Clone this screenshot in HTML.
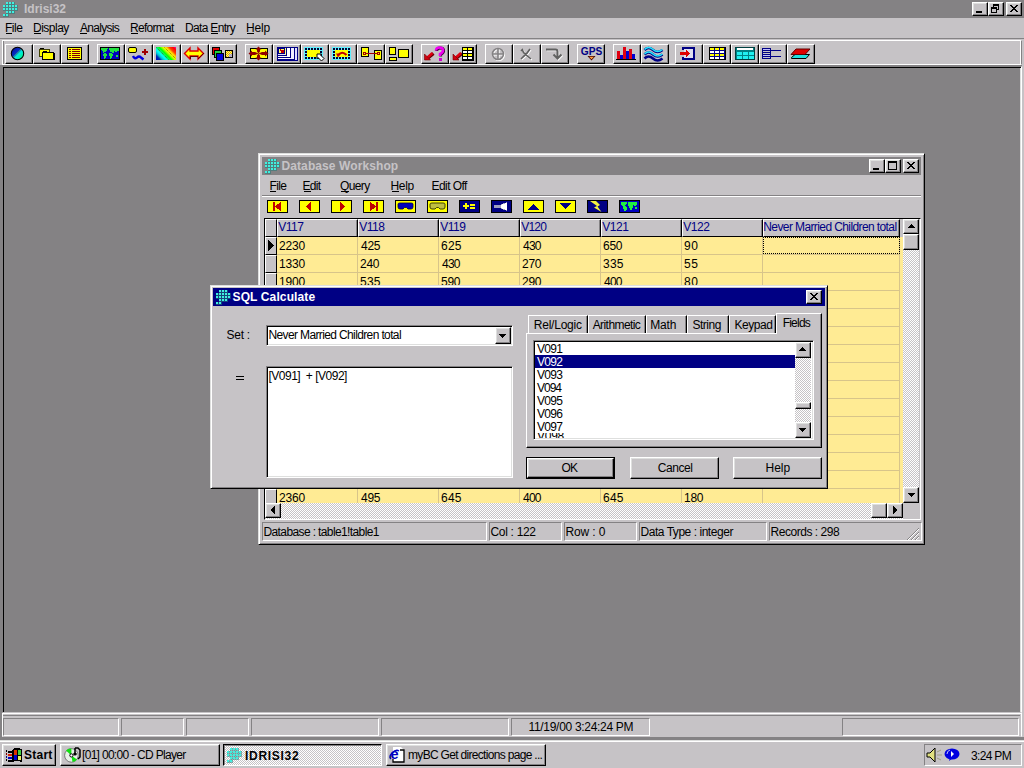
<!DOCTYPE html><html><head><meta charset="utf-8"><style>
html,body{margin:0;padding:0;width:1024px;height:768px;overflow:hidden;background:#c6c3c6;position:relative}
body div{position:absolute;box-sizing:border-box}
.t{font-family:"Liberation Sans",sans-serif;font-size:12px;line-height:12px;white-space:pre;letter-spacing:-0.25px;color:#000}
.tb{font-family:"Liberation Sans",sans-serif;font-size:12px;line-height:12px;white-space:pre;font-weight:bold;color:#000}
svg{position:absolute;overflow:visible}
</style></head><body>

<div style="left:0px;top:0px;width:1024px;height:18px;background:#848284"></div>
<svg style="left:3px;top:2px" width="15" height="15" viewBox="0 0 15 15" shape-rendering="crispEdges"><rect x="2.5" y="-0.5" width="3" height="3" fill="#2a7a78" opacity=".55"/><rect x="5.5" y="-0.5" width="3" height="3" fill="#2a7a78" opacity=".55"/><rect x="8.5" y="-0.5" width="3" height="3" fill="#2a7a78" opacity=".55"/><rect x="-0.5" y="2.5" width="3" height="3" fill="#2a7a78" opacity=".55"/><rect x="2.5" y="2.5" width="3" height="3" fill="#2a7a78" opacity=".55"/><rect x="5.5" y="2.5" width="3" height="3" fill="#2a7a78" opacity=".55"/><rect x="8.5" y="2.5" width="3" height="3" fill="#2a7a78" opacity=".55"/><rect x="11.5" y="2.5" width="3" height="3" fill="#2a7a78" opacity=".55"/><rect x="-0.5" y="5.5" width="3" height="3" fill="#2a7a78" opacity=".55"/><rect x="2.5" y="5.5" width="3" height="3" fill="#2a7a78" opacity=".55"/><rect x="5.5" y="5.5" width="3" height="3" fill="#2a7a78" opacity=".55"/><rect x="8.5" y="5.5" width="3" height="3" fill="#2a7a78" opacity=".55"/><rect x="11.5" y="5.5" width="3" height="3" fill="#2a7a78" opacity=".55"/><rect x="2.5" y="8.5" width="3" height="3" fill="#2a7a78" opacity=".55"/><rect x="5.5" y="8.5" width="3" height="3" fill="#2a7a78" opacity=".55"/><rect x="8.5" y="8.5" width="3" height="3" fill="#2a7a78" opacity=".55"/><rect x="-0.5" y="11.5" width="3" height="3" fill="#2a7a78" opacity=".55"/><rect x="2.5" y="11.5" width="3" height="3" fill="#2a7a78" opacity=".55"/><rect x="3" y="0" width="2" height="2" fill="#40f0e0"/><rect x="6" y="0" width="2" height="2" fill="#40f0e0"/><rect x="9" y="0" width="2" height="2" fill="#40f0e0"/><rect x="0" y="3" width="2" height="2" fill="#40f0e0"/><rect x="3" y="3" width="2" height="2" fill="#40f0e0"/><rect x="6" y="3" width="2" height="2" fill="#40f0e0"/><rect x="9" y="3" width="2" height="2" fill="#40f0e0"/><rect x="12" y="3" width="2" height="2" fill="#40f0e0"/><rect x="0" y="6" width="2" height="2" fill="#40f0e0"/><rect x="3" y="6" width="2" height="2" fill="#40f0e0"/><rect x="6" y="6" width="2" height="2" fill="#40f0e0"/><rect x="9" y="6" width="2" height="2" fill="#40f0e0"/><rect x="12" y="6" width="2" height="2" fill="#40f0e0"/><rect x="3" y="9" width="2" height="2" fill="#40f0e0"/><rect x="6" y="9" width="2" height="2" fill="#40f0e0"/><rect x="9" y="9" width="2" height="2" fill="#40f0e0"/><rect x="0" y="12" width="2" height="2" fill="#40f0e0"/><rect x="3" y="12" width="2" height="2" fill="#40f0e0"/></svg>
<div class="tb" style="left:24px;top:3px;letter-spacing:0.000px;color:#c6c3c6">Idrisi32</div>
<div style="left:972px;top:2px;width:16px;height:14px;background:#c6c3c6;border-style:solid;border-width:1px;border-color:#fff #000 #000 #fff;box-shadow:inset -1px -1px #848284, inset 1px 1px #dedfde;"></div>
<svg style="left:972px;top:2px" width="16" height="14" viewBox="0 0 16 14" shape-rendering="crispEdges"><rect x="4" y="9" width="6" height="2" fill="#000"/></svg>
<div style="left:988px;top:2px;width:16px;height:14px;background:#c6c3c6;border-style:solid;border-width:1px;border-color:#fff #000 #000 #fff;box-shadow:inset -1px -1px #848284, inset 1px 1px #dedfde;"></div>
<svg style="left:988px;top:2px" width="16" height="14" viewBox="0 0 16 14" shape-rendering="crispEdges"><rect x="5" y="2" width="6" height="6" fill="#000"/><rect x="6" y="4" width="4" height="3" fill="#c6c3c6"/><rect x="3" y="5" width="6" height="6" fill="#000"/><rect x="4" y="7" width="4" height="3" fill="#c6c3c6"/></svg>
<div style="left:1006px;top:2px;width:16px;height:14px;background:#c6c3c6;border-style:solid;border-width:1px;border-color:#fff #000 #000 #fff;box-shadow:inset -1px -1px #848284, inset 1px 1px #dedfde;"></div>
<svg style="left:1006px;top:2px" width="16" height="14" viewBox="0 0 16 14" shape-rendering="crispEdges"><path d="M4 3h2v1h-2zM10 3h2v1h-2zM5 4h2v1h-2zM9 4h2v1h-2zM6 5h4v1h-4zM7 6h2v1h-2zM6 7h4v1h-4zM5 8h2v1h-2zM9 8h2v1h-2zM4 9h2v1h-2zM10 9h2v1h-2z" fill="#000"/></svg>
<div class="t" style="left:5px;top:22px;letter-spacing:-0.500px;">File</div>
<div style="left:6px;top:33px;width:6px;height:1px;background:#000"></div>
<div class="t" style="left:33px;top:22px;letter-spacing:-0.500px;">Display</div>
<div style="left:34px;top:33px;width:7px;height:1px;background:#000"></div>
<div class="t" style="left:80px;top:22px;letter-spacing:-0.714px;">Analysis</div>
<div style="left:80px;top:33px;width:7px;height:1px;background:#000"></div>
<div class="t" style="left:130px;top:22px;letter-spacing:-0.714px;">Reformat</div>
<div style="left:131px;top:33px;width:7px;height:1px;background:#000"></div>
<div class="t" style="left:246px;top:22px;letter-spacing:-0.167px;">Help</div>
<div style="left:247px;top:33px;width:7px;height:1px;background:#000"></div>
<div class="t" style="left:185px;top:22px;letter-spacing:-0.667px;">Data Entry</div>
<div style="left:211px;top:33px;width:7px;height:1px;background:#000"></div>
<div style="left:0px;top:38px;width:1024px;height:1px;background:#848284"></div>
<div style="left:2px;top:40px;width:1020px;height:25px;border:1px solid;border-color:#fff #848284 #fff #fff;box-shadow:inset 1px 0 #848284, inset -1px 0 #fff"></div>
<div style="left:5px;top:44px;width:28px;height:20px;background:#c6c3c6;border-style:solid;border-width:1px;border-color:#fff #000 #000 #fff;box-shadow:inset -1px -1px #848284"></div>
<svg style="left:6px;top:45px" width="26" height="18" viewBox="0 0 26 18" shape-rendering="crispEdges"><defs><linearGradient id="g1" x1="0" y1="0" x2="1" y2="1">
<stop offset="0" stop-color="#0000a0"/><stop offset=".42" stop-color="#0830c0"/><stop offset=".45" stop-color="#2080a0"/><stop offset=".52" stop-color="#10a0b0"/><stop offset=".55" stop-color="#00e8e8"/><stop offset="1" stop-color="#00ff60"/></linearGradient></defs>
<circle cx="11.5" cy="8.5" r="6.2" fill="url(#g1)" stroke="#000" stroke-width="1.1" shape-rendering="geometricPrecision"/></svg>
<div style="left:33px;top:44px;width:28px;height:20px;background:#c6c3c6;border-style:solid;border-width:1px;border-color:#fff #000 #000 #fff;box-shadow:inset -1px -1px #848284"></div>
<svg style="left:34px;top:45px" width="26" height="18" viewBox="0 0 26 18" shape-rendering="crispEdges"><rect x="6" y="3" width="4" height="2" fill="#000"/><rect x="5" y="4" width="11" height="8" fill="#404000"/><rect x="6" y="5" width="9" height="6" fill="#ffff00"/><rect x="9" y="6" width="4" height="2" fill="#000"/><rect x="8" y="7" width="12" height="8" fill="#000"/><rect x="9" y="8" width="10" height="6" fill="#ffff00"/><rect x="9" y="8" width="10" height="6" fill="#ffff00"/><rect x="8" y="14" width="13" height="1" fill="#000"/><rect x="20" y="8" width="1" height="7" fill="#000"/></svg>
<div style="left:61px;top:44px;width:28px;height:20px;background:#c6c3c6;border-style:solid;border-width:1px;border-color:#fff #000 #000 #fff;box-shadow:inset -1px -1px #848284"></div>
<svg style="left:62px;top:45px" width="26" height="18" viewBox="0 0 26 18" shape-rendering="crispEdges"><rect x="5" y="2" width="15" height="13" fill="#000"/><rect x="6" y="3" width="13" height="11" fill="#ffff00"/><rect x="7" y="4" width="2" height="1" fill="#800000"/><rect x="10" y="4" width="8" height="1" fill="#800000"/><rect x="7" y="6" width="2" height="1" fill="#800000"/><rect x="10" y="6" width="8" height="1" fill="#800000"/><rect x="7" y="8" width="2" height="1" fill="#800000"/><rect x="10" y="8" width="8" height="1" fill="#800000"/><rect x="7" y="10" width="2" height="1" fill="#800000"/><rect x="10" y="10" width="8" height="1" fill="#800000"/><rect x="7" y="12" width="2" height="1" fill="#800000"/><rect x="10" y="12" width="8" height="1" fill="#800000"/></svg>
<div style="left:97px;top:44px;width:28px;height:20px;background:#c6c3c6;border-style:solid;border-width:1px;border-color:#fff #000 #000 #fff;box-shadow:inset -1px -1px #848284"></div>
<svg style="left:98px;top:45px" width="26" height="18" viewBox="0 0 26 18" shape-rendering="crispEdges"><rect x="2" y="2" width="20" height="13" fill="#000"/><rect x="3" y="3" width="18" height="11" fill="#0000c0"/><path d="M3 3h7v1h-1v2h-1v1h-2v1h-1v-2h-1v-1h-1z M6 8h2v1h1v2h-1v2h-1v1h-1v-3h-1v-2h1z M11 3h10v3h-2v1h-2v-1h-1v2h-2v-1h-2v-2h-1z M11 8h3v1h1v2h-1v2h-1v1h-1v-3h-1z M18 10h2v2h-2z" fill="#20e040"/></svg>
<div style="left:125px;top:44px;width:28px;height:20px;background:#c6c3c6;border-style:solid;border-width:1px;border-color:#fff #000 #000 #fff;box-shadow:inset -1px -1px #848284"></div>
<svg style="left:126px;top:45px" width="26" height="18" viewBox="0 0 26 18" shape-rendering="crispEdges"><rect x="2.5" y="2.5" width="8" height="5" rx="1.5" fill="#ffff00" stroke="#000" shape-rendering="geometricPrecision"/><rect x="18" y="4" width="2" height="6" fill="#a00000"/><rect x="16" y="6" width="6" height="2" fill="#a00000"/><path d="M7 11 Q8.5 14.5 11 12.5 Q13 10.5 15 12.5 L17.5 14.5" fill="none" stroke="#0000e0" stroke-width="2.4" shape-rendering="geometricPrecision"/></svg>
<div style="left:153px;top:44px;width:28px;height:20px;background:#c6c3c6;border-style:solid;border-width:1px;border-color:#fff #000 #000 #fff;box-shadow:inset -1px -1px #848284"></div>
<svg style="left:154px;top:45px" width="26" height="18" viewBox="0 0 26 18" shape-rendering="crispEdges"><defs><linearGradient id="g6" gradientUnits="userSpaceOnUse" x1="2" y1="15" x2="18.5" y2="-1.5">
<stop offset="0" stop-color="#0000c0"/><stop offset=".14" stop-color="#0030b0"/><stop offset=".22" stop-color="#00c0d0"/><stop offset=".32" stop-color="#00ffff"/><stop offset=".4" stop-color="#00ff80"/><stop offset=".48" stop-color="#00ff00"/><stop offset=".58" stop-color="#c0ff00"/><stop offset=".63" stop-color="#ffff00"/><stop offset=".7" stop-color="#ffd000"/><stop offset=".78" stop-color="#ff4000"/><stop offset=".9" stop-color="#ff0000"/><stop offset="1" stop-color="#ff00c0"/></linearGradient></defs>
<rect x="2" y="2" width="20" height="13" fill="url(#g6)"/>
<path d="M2.5 2.5 L15 15 M10.5 2.5 L22 14" stroke="#604000" stroke-width="1" stroke-dasharray="1 1" shape-rendering="geometricPrecision" opacity=".8"/></svg>
<div style="left:181px;top:44px;width:28px;height:20px;background:#c6c3c6;border-style:solid;border-width:1px;border-color:#fff #000 #000 #fff;box-shadow:inset -1px -1px #848284"></div>
<svg style="left:182px;top:45px" width="26" height="18" viewBox="0 0 26 18" shape-rendering="crispEdges"><path d="M2.5 8.5 L8 3 L8 6 L16 6 L16 3 L21.5 8.5 L16 14 L16 11 L8 11 L8 14 Z" fill="#ffff00" stroke="#e00000" stroke-width="1.4" shape-rendering="geometricPrecision"/><path d="M8 14 L8 11 L16 11 M16 14 L21.5 8.5" stroke="#600000" stroke-width="1" fill="none"/></svg>
<div style="left:209px;top:44px;width:28px;height:20px;background:#c6c3c6;border-style:solid;border-width:1px;border-color:#fff #000 #000 #fff;box-shadow:inset -1px -1px #848284"></div>
<svg style="left:210px;top:45px" width="26" height="18" viewBox="0 0 26 18" shape-rendering="crispEdges"><rect x="2" y="2" width="8" height="8" fill="#000"/><rect x="3" y="3" width="6" height="6" fill="#e00000"/><rect x="4" y="5" width="8" height="8" fill="#000"/><rect x="5" y="6" width="6" height="6" fill="#20d040"/><rect x="6" y="8" width="8" height="8" fill="#000"/><rect x="7" y="9" width="6" height="6" fill="#0000e0"/><rect x="15" y="5" width="8" height="8" fill="#000"/><rect x="16" y="6" width="6" height="6" fill="#000"/><rect x="16" y="6" width="6" height="6" fill="#e0a000"/><path d="M16 6h1v1h-1zM18 6h1v1h-1zM20 6h1v1h-1zM17 7h1v1h-1zM19 7h1v1h-1zM21 7h1v1h-1zM16 8h1v1h-1zM18 8h1v1h-1zM20 8h1v1h-1zM17 9h1v1h-1zM19 9h1v1h-1zM21 9h1v1h-1zM16 10h1v1h-1zM18 10h1v1h-1zM20 10h1v1h-1zM17 11h1v1h-1zM19 11h1v1h-1zM21 11h1v1h-1z" fill="#ffff60"/><rect x="19" y="9" width="3" height="3" fill="#a0a0ff" opacity=".7"/></svg>
<div style="left:245px;top:44px;width:28px;height:20px;background:#c6c3c6;border-style:solid;border-width:1px;border-color:#fff #000 #000 #fff;box-shadow:inset -1px -1px #848284"></div>
<svg style="left:246px;top:45px" width="26" height="18" viewBox="0 0 26 18" shape-rendering="crispEdges"><rect x="4" y="3" width="18" height="11" fill="#000"/><rect x="5" y="4" width="16" height="9" fill="#ffff00"/><path d="M12.5 1.5 L15.5 4.5 L14 4.5 L14 6.5 L12.5 8.5 L11 6.5 L11 4.5 L9.5 4.5 Z M12.5 15.5 L15.5 12.5 L14 12.5 L14 10.5 L12.5 8.5 L11 10.5 L11 12.5 L9.5 12.5 Z M2.5 8.5 L6 5.5 L6 7 L9 7 L12.5 8.5 L9 10 L6 10 L6 11.5 Z M22.5 8.5 L19 5.5 L19 7 L16 7 L12.5 8.5 L16 10 L19 10 L19 11.5 Z" fill="#900000" shape-rendering="geometricPrecision"/></svg>
<div style="left:273px;top:44px;width:28px;height:20px;background:#c6c3c6;border-style:solid;border-width:1px;border-color:#fff #000 #000 #fff;box-shadow:inset -1px -1px #848284"></div>
<svg style="left:274px;top:45px" width="26" height="18" viewBox="0 0 26 18" shape-rendering="crispEdges"><rect x="3" y="2" width="21" height="14" fill="#000084"/><rect x="4" y="3" width="19" height="12" fill="#fff"/><rect x="4" y="3" width="19" height="12" fill="#e0e0ff"/><rect x="4" y="10" width="9" height="1" fill="#000084"/><rect x="12" y="3" width="1" height="8" fill="#000084"/><rect x="4" y="12" width="13" height="1" fill="#000084"/><rect x="16" y="3" width="1" height="10" fill="#000084"/><rect x="4" y="14" width="17" height="1" fill="#000084"/><rect x="20" y="3" width="1" height="12" fill="#000084"/><rect x="13" y="3" width="3" height="9" fill="#fff"/><rect x="4" y="11" width="8" height="1" fill="#fff"/><rect x="17" y="3" width="3" height="11" fill="#f0f0ff"/><rect x="4" y="13" width="12" height="1" fill="#fff"/><rect x="4" y="3" width="7" height="6" fill="#000084"/><rect x="5" y="4" width="5" height="4" fill="#ffff60"/><path d="M6 4.5 L9 7.5 M9 5 V7.5 H6.5" stroke="#c00000" stroke-width="1.2" fill="none"/><rect x="11" y="3" width="1" height="7" fill="#ffff80"/></svg>
<div style="left:301px;top:44px;width:28px;height:20px;background:#c6c3c6;border-style:solid;border-width:1px;border-color:#fff #000 #000 #fff;box-shadow:inset -1px -1px #848284"></div>
<svg style="left:302px;top:45px" width="26" height="18" viewBox="0 0 26 18" shape-rendering="crispEdges"><rect x="2" y="2" width="19" height="13" fill="#60f0ff"/><rect x="5" y="5" width="13" height="7" fill="#ffff00"/><rect x="3" y="3" width="2" height="2" fill="#000030"/><rect x="3" y="6" width="2" height="2" fill="#000030"/><rect x="3" y="9" width="2" height="2" fill="#000030"/><rect x="3" y="12" width="2" height="2" fill="#000030"/><rect x="6" y="3" width="2" height="2" fill="#000030"/><rect x="6" y="12" width="2" height="2" fill="#000030"/><rect x="9" y="3" width="2" height="2" fill="#000030"/><rect x="9" y="12" width="2" height="2" fill="#000030"/><rect x="12" y="3" width="2" height="2" fill="#000030"/><rect x="12" y="12" width="2" height="2" fill="#000030"/><rect x="15" y="3" width="2" height="2" fill="#000030"/><rect x="15" y="12" width="2" height="2" fill="#000030"/><rect x="18" y="3" width="2" height="2" fill="#000030"/><rect x="18" y="6" width="2" height="2" fill="#000030"/><rect x="18" y="9" width="2" height="2" fill="#000030"/><rect x="18" y="12" width="2" height="2" fill="#000030"/><path d="M15 9 H19.5 L18.5 10 L22 13.5 L19.5 16 L16 12.5 L15 13.5 Z" fill="#fff" stroke="#000" stroke-width="1" shape-rendering="geometricPrecision"/></svg>
<div style="left:329px;top:44px;width:28px;height:20px;background:#c6c3c6;border-style:solid;border-width:1px;border-color:#fff #000 #000 #fff;box-shadow:inset -1px -1px #848284"></div>
<svg style="left:330px;top:45px" width="26" height="18" viewBox="0 0 26 18" shape-rendering="crispEdges"><rect x="2" y="2" width="19" height="13" fill="#60f0ff"/><rect x="5" y="5" width="13" height="7" fill="#ffff00"/><rect x="3" y="3" width="2" height="2" fill="#000030"/><rect x="3" y="6" width="2" height="2" fill="#000030"/><rect x="3" y="9" width="2" height="2" fill="#000030"/><rect x="3" y="12" width="2" height="2" fill="#000030"/><rect x="6" y="3" width="2" height="2" fill="#000030"/><rect x="6" y="12" width="2" height="2" fill="#000030"/><rect x="9" y="3" width="2" height="2" fill="#000030"/><rect x="9" y="12" width="2" height="2" fill="#000030"/><rect x="12" y="3" width="2" height="2" fill="#000030"/><rect x="12" y="12" width="2" height="2" fill="#000030"/><rect x="15" y="3" width="2" height="2" fill="#000030"/><rect x="15" y="12" width="2" height="2" fill="#000030"/><rect x="18" y="3" width="2" height="2" fill="#000030"/><rect x="18" y="6" width="2" height="2" fill="#000030"/><rect x="18" y="9" width="2" height="2" fill="#000030"/><rect x="18" y="12" width="2" height="2" fill="#000030"/><path d="M8.5 10 Q12 5.5 16.5 10" fill="none" stroke="#c00000" stroke-width="2.2" shape-rendering="geometricPrecision"/><path d="M6 8.5 L10.5 8.5 L8 12.5 Z" fill="#c00000" shape-rendering="geometricPrecision"/></svg>
<div style="left:357px;top:44px;width:28px;height:20px;background:#c6c3c6;border-style:solid;border-width:1px;border-color:#fff #000 #000 #fff;box-shadow:inset -1px -1px #848284"></div>
<svg style="left:358px;top:45px" width="26" height="18" viewBox="0 0 26 18" shape-rendering="crispEdges"><rect x="3" y="2" width="8" height="10" fill="#000"/><rect x="4" y="3" width="6" height="8" fill="#ffff00"/><rect x="16" y="5" width="8" height="10" fill="#000"/><rect x="17" y="6" width="6" height="8" fill="#ffff00"/><rect x="8" y="8" width="11" height="1" fill="#a00000"/><rect x="5" y="7" width="3" height="3" fill="#a00000"/><rect x="6" y="8" width="1" height="1" fill="#ffff00"/><rect x="19" y="7" width="3" height="3" fill="#a00000"/><rect x="20" y="8" width="1" height="1" fill="#ffff00"/></svg>
<div style="left:385px;top:44px;width:28px;height:20px;background:#c6c3c6;border-style:solid;border-width:1px;border-color:#fff #000 #000 #fff;box-shadow:inset -1px -1px #848284"></div>
<svg style="left:386px;top:45px" width="26" height="18" viewBox="0 0 26 18" shape-rendering="crispEdges"><rect x="3" y="2" width="7" height="8" fill="#000"/><rect x="4" y="3" width="5" height="6" fill="#ffff00"/><rect x="3" y="12" width="8" height="4" fill="#000"/><rect x="4" y="13" width="6" height="2" fill="#ffff00"/><rect x="12" y="4" width="11" height="9" fill="#000"/><rect x="13" y="5" width="9" height="7" fill="#ffff00"/></svg>
<div style="left:421px;top:44px;width:28px;height:20px;background:#c6c3c6;border-style:solid;border-width:1px;border-color:#fff #000 #000 #fff;box-shadow:inset -1px -1px #848284"></div>
<svg style="left:422px;top:45px" width="26" height="18" viewBox="0 0 26 18" shape-rendering="crispEdges"><g transform="translate(0 0)" shape-rendering="geometricPrecision"><path d="M11.5 8.5 L6 13" stroke="#600000" stroke-width="3.2"/><path d="M10.5 8 L5.5 12.5" stroke="#e00010" stroke-width="2.6"/><path d="M2.5 9 L2.5 15 L8.5 15 Z" fill="#d00010" stroke="#700000" stroke-width=".6"/></g><path d="M14 5.5 Q14 2.5 17.5 2.5 Q21 2.5 21 5.5 Q21 7.5 18 9 L18 11" stroke="#400040" stroke-width="2.8" fill="none" transform="translate(.7 .5)" shape-rendering="geometricPrecision"/><path d="M14 5.5 Q14 2.5 17.5 2.5 Q21 2.5 21 5.5 Q21 7.5 18 9 L18 11" stroke="#f000f0" stroke-width="2.6" fill="none" shape-rendering="geometricPrecision"/><rect x="17" y="13" width="3" height="3" fill="#d000d0"/></svg>
<div style="left:449px;top:44px;width:28px;height:20px;background:#c6c3c6;border-style:solid;border-width:1px;border-color:#fff #000 #000 #fff;box-shadow:inset -1px -1px #848284"></div>
<svg style="left:450px;top:45px" width="26" height="18" viewBox="0 0 26 18" shape-rendering="crispEdges"><g transform="translate(0.5 0)" shape-rendering="geometricPrecision"><path d="M11.5 8.5 L6 13" stroke="#600000" stroke-width="3.2"/><path d="M10.5 8 L5.5 12.5" stroke="#e00010" stroke-width="2.6"/><path d="M2.5 9 L2.5 15 L8.5 15 Z" fill="#d00010" stroke="#700000" stroke-width=".6"/></g><rect x="12" y="2" width="12" height="14" fill="#000"/><rect x="13" y="2" width="1" height="1" fill="#000"/><rect x="13" y="3" width="4" height="2" fill="#ffff00"/><rect x="18" y="3" width="4" height="2" fill="#ffff00"/><rect x="13" y="6" width="4" height="2" fill="#fff"/><rect x="18" y="6" width="4" height="2" fill="#fff"/><rect x="13" y="9" width="4" height="2" fill="#ffff00"/><rect x="18" y="9" width="4" height="2" fill="#ffff00"/><rect x="13" y="12" width="4" height="2" fill="#fff"/><rect x="18" y="12" width="4" height="2" fill="#fff"/></svg>
<div style="left:485px;top:44px;width:28px;height:20px;background:#c6c3c6;border-style:solid;border-width:1px;border-color:#fff #000 #000 #fff;box-shadow:inset -1px -1px #848284"></div>
<svg style="left:486px;top:45px" width="26" height="18" viewBox="0 0 26 18" shape-rendering="crispEdges"><g shape-rendering="geometricPrecision"><circle cx="12" cy="9" r="5.5" fill="none" stroke="#fff" stroke-width="1.6" transform="translate(.8 .8)"/><path d="M12 3.5 V14.5 M6.5 9 H17.5" stroke="#fff" stroke-width="1.6" transform="translate(.8 .8)"/><circle cx="12" cy="9" r="5.5" fill="none" stroke="#848284" stroke-width="1.6"/><path d="M12 3.5 V14.5 M6.5 9 H17.5" stroke="#848284" stroke-width="1.6"/></g></svg>
<div style="left:513px;top:44px;width:28px;height:20px;background:#c6c3c6;border-style:solid;border-width:1px;border-color:#fff #000 #000 #fff;box-shadow:inset -1px -1px #848284"></div>
<svg style="left:514px;top:45px" width="26" height="18" viewBox="0 0 26 18" shape-rendering="crispEdges"><g shape-rendering="geometricPrecision" fill="none" stroke-width="1.6"><path d="M8 4 Q9 8 12 10 L17 14 M16 4 Q13 9 9 12 L7 14 M7 6 l2 -2" stroke="#fff" transform="translate(.8 .8)"/><path d="M8 4 Q9 8 12 10 L17 14 M16 4 Q13 9 9 12 L7 14 M7 6 l2 -2" stroke="#606060"/></g></svg>
<div style="left:541px;top:44px;width:28px;height:20px;background:#c6c3c6;border-style:solid;border-width:1px;border-color:#fff #000 #000 #fff;box-shadow:inset -1px -1px #848284"></div>
<svg style="left:542px;top:45px" width="26" height="18" viewBox="0 0 26 18" shape-rendering="crispEdges"><g shape-rendering="geometricPrecision" fill="none" stroke-width="2"><path d="M4 4.5 H13.5 Q15.5 4.5 15.5 6.5 V12.5 M11.5 9.5 L15.5 13.5 L19.5 9.5" stroke="#fff" transform="translate(.8 .8)"/><path d="M4 4.5 H13.5 Q15.5 4.5 15.5 6.5 V12.5 M11.5 9.5 L15.5 13.5 L19.5 9.5" stroke="#606060"/></g></svg>
<div style="left:577px;top:44px;width:28px;height:20px;background:#c6c3c6;border-style:solid;border-width:1px;border-color:#fff #000 #000 #fff;box-shadow:inset -1px -1px #848284"></div>
<svg style="left:578px;top:45px" width="26" height="18" viewBox="0 0 26 18" shape-rendering="crispEdges"><text x="13.6" y="9.8" text-anchor="middle" font-family="Liberation Sans" font-weight="bold" font-size="10" fill="#000084" textLength="21.5" lengthAdjust="spacingAndGlyphs" shape-rendering="geometricPrecision">GPS</text><path d="M9.5 11 L17.5 11 L13.5 15.5 Z" fill="#400000" shape-rendering="geometricPrecision"/><path d="M11 11.8 L16 11.8 L13.5 14.3 Z" fill="#ffa040" shape-rendering="geometricPrecision"/></svg>
<div style="left:613px;top:44px;width:28px;height:20px;background:#c6c3c6;border-style:solid;border-width:1px;border-color:#fff #000 #000 #fff;box-shadow:inset -1px -1px #848284"></div>
<svg style="left:614px;top:45px" width="26" height="18" viewBox="0 0 26 18" shape-rendering="crispEdges"><rect x="2" y="14" width="20" height="1" fill="#000"/><rect x="3" y="6" width="3" height="8" fill="#e00010"/><rect x="6" y="10" width="3" height="4" fill="#0000d0"/><rect x="9" y="2" width="3" height="12" fill="#e00010"/><rect x="12" y="6" width="3" height="8" fill="#0000d0"/><rect x="15" y="4" width="3" height="10" fill="#e00010"/><rect x="18" y="9" width="3" height="5" fill="#0000d0"/></svg>
<div style="left:641px;top:44px;width:28px;height:20px;background:#c6c3c6;border-style:solid;border-width:1px;border-color:#fff #000 #000 #fff;box-shadow:inset -1px -1px #848284"></div>
<svg style="left:642px;top:45px" width="26" height="18" viewBox="0 0 26 18" shape-rendering="crispEdges"><g shape-rendering="geometricPrecision" fill="none"><path d="M2.5 5 Q6.5 1 11 5 T20.5 5 M2.5 9.5 Q6.5 5.5 11 9.5 T20.5 9.5 M2.5 13.5 Q6.5 9.5 11 13.5 T20.5 13.5" stroke="#000084" stroke-width="2.6"/><path d="M2.5 4.5 Q6.5 0.5 11 4.5 T20.5 4.5 M2.5 9 Q6.5 5 11 9 T20.5 9" stroke="#20e8ff" stroke-width="1.6"/></g></svg>
<div style="left:675px;top:44px;width:28px;height:20px;background:#c6c3c6;border-style:solid;border-width:1px;border-color:#fff #000 #000 #fff;box-shadow:inset -1px -1px #848284"></div>
<svg style="left:676px;top:45px" width="26" height="18" viewBox="0 0 26 18" shape-rendering="crispEdges"><rect x="6" y="2" width="13" height="13" fill="#000084"/><rect x="8" y="4" width="9" height="9" fill="#e0e0f0"/><rect x="6" y="5" width="2" height="7" fill="#c6c3c6"/><path d="M4 7 H10 V5 L14 8.5 L10 12 V10 H4 Z" fill="#e00000"/></svg>
<div style="left:703px;top:44px;width:28px;height:20px;background:#c6c3c6;border-style:solid;border-width:1px;border-color:#fff #000 #000 #fff;box-shadow:inset -1px -1px #848284"></div>
<svg style="left:704px;top:45px" width="26" height="18" viewBox="0 0 26 18" shape-rendering="crispEdges"><rect x="5" y="2" width="17" height="13" fill="#000"/><rect x="6" y="3" width="15" height="11" fill="#000084"/><rect x="6" y="3" width="1" height="1" fill="#c0c0ff"/><rect x="6" y="3" width="4" height="2" fill="#ffff00"/><rect x="11" y="3" width="4" height="2" fill="#ffff00"/><rect x="16" y="3" width="4" height="2" fill="#ffff00"/><rect x="6" y="6" width="4" height="2" fill="#fff"/><rect x="11" y="6" width="4" height="2" fill="#fff"/><rect x="16" y="6" width="4" height="2" fill="#fff"/><rect x="6" y="9" width="4" height="2" fill="#ffff00"/><rect x="11" y="9" width="4" height="2" fill="#ffff00"/><rect x="16" y="9" width="4" height="2" fill="#ffff00"/><rect x="6" y="12" width="4" height="2" fill="#fff"/><rect x="11" y="12" width="4" height="2" fill="#fff"/><rect x="16" y="12" width="4" height="2" fill="#fff"/></svg>
<div style="left:731px;top:44px;width:28px;height:20px;background:#c6c3c6;border-style:solid;border-width:1px;border-color:#fff #000 #000 #fff;box-shadow:inset -1px -1px #848284"></div>
<svg style="left:732px;top:45px" width="26" height="18" viewBox="0 0 26 18" shape-rendering="crispEdges"><rect x="3" y="2" width="20" height="13" fill="#004040"/><rect x="4" y="3" width="18" height="11" fill="#008284"/><rect x="5" y="3" width="16" height="2" fill="#fff"/><rect x="5" y="7" width="5" height="3" fill="#20f0f0"/><rect x="11" y="7" width="5" height="3" fill="#20f0f0"/><rect x="17" y="7" width="5" height="3" fill="#20f0f0"/><rect x="5" y="11" width="5" height="3" fill="#20f0f0"/><rect x="11" y="11" width="5" height="3" fill="#20f0f0"/><rect x="17" y="11" width="5" height="3" fill="#20f0f0"/></svg>
<div style="left:759px;top:44px;width:28px;height:20px;background:#c6c3c6;border-style:solid;border-width:1px;border-color:#fff #000 #000 #fff;box-shadow:inset -1px -1px #848284"></div>
<svg style="left:760px;top:45px" width="26" height="18" viewBox="0 0 26 18" shape-rendering="crispEdges"><rect x="2" y="3" width="9" height="1" fill="#000084"/><rect x="2" y="5" width="9" height="1" fill="#000084"/><rect x="2" y="7" width="9" height="1" fill="#000084"/><rect x="2" y="9" width="9" height="1" fill="#000084"/><rect x="2" y="11" width="9" height="1" fill="#000084"/><rect x="2" y="13" width="9" height="1" fill="#000084"/><rect x="2" y="3" width="1" height="11" fill="#000084"/><rect x="10" y="3" width="1" height="11" fill="#000084"/><rect x="11" y="5" width="10" height="1" fill="#000084"/><rect x="11" y="11" width="10" height="1" fill="#000084"/><rect x="3" y="4" width="7" height="1" fill="#c0c0ff"/><rect x="3" y="10" width="7" height="1" fill="#c0c0ff"/></svg>
<div style="left:787px;top:44px;width:28px;height:20px;background:#c6c3c6;border-style:solid;border-width:1px;border-color:#fff #000 #000 #fff;box-shadow:inset -1px -1px #848284"></div>
<svg style="left:788px;top:45px" width="26" height="18" viewBox="0 0 26 18" shape-rendering="crispEdges"><path d="M3.5 12.5 L7 9.5 H21.5 L18 13.5 H3.5 Z" fill="#20e0e0" stroke="#000" stroke-width="1" shape-rendering="geometricPrecision"/><path d="M3 9.5 L8 4 H22 L17 9.5 Z" fill="#e00000" stroke="#600000" stroke-width="1" shape-rendering="geometricPrecision"/></svg>
<div style="left:0px;top:65px;width:3px;height:673px;background:#848284"></div>
<div style="left:2px;top:65px;width:1020px;height:1px;background:#848284"></div>
<div style="left:2px;top:66px;width:1020px;height:647px;background:#848284;border:1px solid;border-color:#848284 #fff #c6c3c6 #848284;box-shadow:inset 1px 1px #000, inset -1px 0 #dedfde"></div>
<div style="left:2px;top:713px;width:1020px;height:24px;border:1px solid;border-color:#fff #fff #c6c3c6 #fff"></div>
<div style="left:3px;top:715px;width:1017px;height:1px;background:#848284"></div>
<div style="left:3px;top:718px;width:116px;height:18px;background:#c6c3c6;border-style:solid;border-width:1px;border-color:#848284 #fff #fff #848284;"></div>
<div style="left:121px;top:718px;width:63px;height:18px;background:#c6c3c6;border-style:solid;border-width:1px;border-color:#848284 #fff #fff #848284;"></div>
<div style="left:186px;top:718px;width:63px;height:18px;background:#c6c3c6;border-style:solid;border-width:1px;border-color:#848284 #fff #fff #848284;"></div>
<div style="left:251px;top:718px;width:128px;height:18px;background:#c6c3c6;border-style:solid;border-width:1px;border-color:#848284 #fff #fff #848284;"></div>
<div style="left:381px;top:718px;width:128px;height:18px;background:#c6c3c6;border-style:solid;border-width:1px;border-color:#848284 #fff #fff #848284;"></div>
<div style="left:511px;top:718px;width:139px;height:18px;background:#c6c3c6;border-style:solid;border-width:1px;border-color:#848284 #fff #fff #848284;"></div>
<div style="left:842px;top:718px;width:177px;height:18px;background:#c6c3c6;border-style:solid;border-width:1px;border-color:#848284 #fff #fff #848284;"></div>
<div class="t" style="left:528.5px;top:721px;letter-spacing:-0.306px;">11/19/00 3:24:24 PM</div>
<div style="left:0px;top:737px;width:1024px;height:3px;background:#848284"></div>
<div style="left:0px;top:740px;width:1024px;height:28px;background:#c6c3c6;border-top:1px solid #dedfde;box-shadow:inset 0 1px #fff"></div>
<div style="left:2px;top:744px;width:54px;height:22px;background:#c6c3c6;border-style:solid;border-width:1px;border-color:#fff #000 #000 #fff;box-shadow:inset -1px -1px #848284, inset 1px 1px #dedfde;"></div>
<svg style="left:4px;top:746px" width="20" height="18" viewBox="0 0 20 18" shape-rendering="crispEdges"><rect x="2" y="4" width="1" height="2" fill="#000"/><rect x="2" y="7" width="1" height="2" fill="#800000"/><rect x="2" y="10" width="1" height="2" fill="#000084"/><rect x="2" y="13" width="1" height="2" fill="#000"/><rect x="4" y="5" width="4" height="2" fill="#000"/><rect x="4" y="8" width="4" height="2" fill="#e02000"/><rect x="4" y="11" width="4" height="2" fill="#0000c0"/><rect x="4" y="14" width="4" height="2" fill="#000"/><path d="M8 4 L11 2 L14 2 L18 3 V16 L14 15 L11 15 L8 16 Z" fill="#000"/><rect x="10" y="4" width="3" height="5" fill="#e03000"/><rect x="14" y="4" width="3" height="5" fill="#40d040"/><rect x="10" y="9" width="3" height="5" fill="#0000d0"/><rect x="14" y="10" width="3" height="4" fill="#f0f060"/></svg>
<div class="tb" style="left:24px;top:749px;letter-spacing:0.250px;">Start</div>
<div style="left:60px;top:744px;width:160px;height:22px;background:#c6c3c6;border-style:solid;border-width:1px;border-color:#fff #000 #000 #fff;box-shadow:inset -1px -1px #848284, inset 1px 1px #dedfde;"></div>
<svg style="left:63px;top:747px" width="18" height="16" viewBox="0 0 18 16"><circle cx="8.4" cy="8.4" r="6.8" fill="#e8f0e8" stroke="#606060" stroke-width=".8"/><path d="M8.4 8.4 L3 3.5 A6.8 6.8 0 0 1 8.4 1.6 Z M8.4 8.4 L9.5 15 A6.8 6.8 0 0 0 14 12.5 Z" fill="#10e010"/><circle cx="8.4" cy="8.4" r="1.6" fill="#fff" stroke="#000" stroke-width="1"/><path d="M12 1 H15 L17 3 V10 L15 12" stroke="#000" stroke-width="1.5" fill="none"/><path d="M12 1 V6" stroke="#000" stroke-width="1.5"/><ellipse cx="12" cy="7" rx="1.8" ry="1.5" fill="#000"/></svg>
<div class="t" style="left:82px;top:749px;letter-spacing:-0.690px;">[01] 00:00 - CD Player</div>
<div style="left:223px;top:744px;width:159px;height:22px;background-color:#fff;background-image:linear-gradient(45deg,#c6c3c6 25%,transparent 25%,transparent 75%,#c6c3c6 75%),linear-gradient(45deg,#c6c3c6 25%,transparent 25%,transparent 75%,#c6c3c6 75%);background-size:2px 2px;background-position:0 0,1px 1px;border:1px solid;border-color:#000 #fff #fff #000;box-shadow:inset 1px 1px #848284"></div>
<svg style="left:227px;top:748px" width="15" height="15" viewBox="0 0 15 15" shape-rendering="crispEdges"><rect x="2.5" y="-0.5" width="3" height="3" fill="#2a7a78" opacity=".55"/><rect x="5.5" y="-0.5" width="3" height="3" fill="#2a7a78" opacity=".55"/><rect x="8.5" y="-0.5" width="3" height="3" fill="#2a7a78" opacity=".55"/><rect x="-0.5" y="2.5" width="3" height="3" fill="#2a7a78" opacity=".55"/><rect x="2.5" y="2.5" width="3" height="3" fill="#2a7a78" opacity=".55"/><rect x="5.5" y="2.5" width="3" height="3" fill="#2a7a78" opacity=".55"/><rect x="8.5" y="2.5" width="3" height="3" fill="#2a7a78" opacity=".55"/><rect x="11.5" y="2.5" width="3" height="3" fill="#2a7a78" opacity=".55"/><rect x="-0.5" y="5.5" width="3" height="3" fill="#2a7a78" opacity=".55"/><rect x="2.5" y="5.5" width="3" height="3" fill="#2a7a78" opacity=".55"/><rect x="5.5" y="5.5" width="3" height="3" fill="#2a7a78" opacity=".55"/><rect x="8.5" y="5.5" width="3" height="3" fill="#2a7a78" opacity=".55"/><rect x="11.5" y="5.5" width="3" height="3" fill="#2a7a78" opacity=".55"/><rect x="2.5" y="8.5" width="3" height="3" fill="#2a7a78" opacity=".55"/><rect x="5.5" y="8.5" width="3" height="3" fill="#2a7a78" opacity=".55"/><rect x="8.5" y="8.5" width="3" height="3" fill="#2a7a78" opacity=".55"/><rect x="-0.5" y="11.5" width="3" height="3" fill="#2a7a78" opacity=".55"/><rect x="2.5" y="11.5" width="3" height="3" fill="#2a7a78" opacity=".55"/><rect x="3" y="0" width="2" height="2" fill="#40f0e0"/><rect x="6" y="0" width="2" height="2" fill="#40f0e0"/><rect x="9" y="0" width="2" height="2" fill="#40f0e0"/><rect x="0" y="3" width="2" height="2" fill="#40f0e0"/><rect x="3" y="3" width="2" height="2" fill="#40f0e0"/><rect x="6" y="3" width="2" height="2" fill="#40f0e0"/><rect x="9" y="3" width="2" height="2" fill="#40f0e0"/><rect x="12" y="3" width="2" height="2" fill="#40f0e0"/><rect x="0" y="6" width="2" height="2" fill="#40f0e0"/><rect x="3" y="6" width="2" height="2" fill="#40f0e0"/><rect x="6" y="6" width="2" height="2" fill="#40f0e0"/><rect x="9" y="6" width="2" height="2" fill="#40f0e0"/><rect x="12" y="6" width="2" height="2" fill="#40f0e0"/><rect x="3" y="9" width="2" height="2" fill="#40f0e0"/><rect x="6" y="9" width="2" height="2" fill="#40f0e0"/><rect x="9" y="9" width="2" height="2" fill="#40f0e0"/><rect x="0" y="12" width="2" height="2" fill="#40f0e0"/><rect x="3" y="12" width="2" height="2" fill="#40f0e0"/></svg>
<div class="tb" style="left:245px;top:750px;letter-spacing:0.714px;">IDRISI32</div>
<div style="left:386px;top:744px;width:160px;height:22px;background:#c6c3c6;border-style:solid;border-width:1px;border-color:#fff #000 #000 #fff;box-shadow:inset -1px -1px #848284, inset 1px 1px #dedfde;"></div>
<svg style="left:388px;top:746px" width="19" height="17" viewBox="0 0 19 17"><path d="M5 1 H13 L16 4 V16 H5 Z" fill="#fff"/><path d="M12 4 H16 V16 H5 V13" stroke="#000" stroke-width="1.3" fill="none"/><text x="2.5" y="13" font-family="Liberation Sans" font-weight="bold" font-size="14.5" fill="#0000c0">e</text><path d="M3 13 Q0.5 11 4 7 Q8 3 11 5" stroke="#0000c0" stroke-width="1.4" fill="none"/><path d="M3 10 L2 12" stroke="#204020" stroke-width="1"/></svg>
<div class="t" style="left:408px;top:749px;letter-spacing:-0.685px;">myBC Get directions page ...</div>
<div style="left:924px;top:744px;width:98px;height:22px;background:#c6c3c6;border-style:solid;border-width:1px;border-color:#848284 #fff #fff #848284;"></div>
<svg style="left:926px;top:747px" width="18" height="16" viewBox="0 0 18 16"><path d="M1 6 H4 L9 1 V15 L4 10 H1 Z" fill="#e0e080" stroke="#000" stroke-width="1"/><path d="M11 5 L15 3 M11 8 H16 M11 11 L15 13" stroke="#a0a080" stroke-width="1"/></svg>
<svg style="left:944px;top:748px" width="17" height="14" viewBox="0 0 17 14"><ellipse cx="8" cy="6" rx="7.5" ry="5.5" fill="#0000e0"/><path d="M6 10 L5 13 L9 10 Z" fill="#0000e0"/><path d="M7 3 L10 6 L7 9 Z" fill="#fff"/><path d="M3 6 Q3 3 6 2" stroke="#c0c0ff" stroke-width="1" fill="none"/></svg>
<div class="t" style="left:971px;top:750px;letter-spacing:-0.667px;">3:24 PM</div>
<div style="left:258px;top:153px;width:667px;height:392px;background:#c6c3c6;border:1px solid;border-color:#dedfde #000 #000 #dedfde;box-shadow:inset 1px 1px #fff, inset -1px -1px #848284"></div>
<div style="left:262px;top:157px;width:659px;height:18px;background:#848284"></div>
<svg style="left:265px;top:159px" width="15" height="15" viewBox="0 0 15 15" shape-rendering="crispEdges"><rect x="2.5" y="-0.5" width="3" height="3" fill="#2a7a78" opacity=".55"/><rect x="5.5" y="-0.5" width="3" height="3" fill="#2a7a78" opacity=".55"/><rect x="8.5" y="-0.5" width="3" height="3" fill="#2a7a78" opacity=".55"/><rect x="-0.5" y="2.5" width="3" height="3" fill="#2a7a78" opacity=".55"/><rect x="2.5" y="2.5" width="3" height="3" fill="#2a7a78" opacity=".55"/><rect x="5.5" y="2.5" width="3" height="3" fill="#2a7a78" opacity=".55"/><rect x="8.5" y="2.5" width="3" height="3" fill="#2a7a78" opacity=".55"/><rect x="11.5" y="2.5" width="3" height="3" fill="#2a7a78" opacity=".55"/><rect x="-0.5" y="5.5" width="3" height="3" fill="#2a7a78" opacity=".55"/><rect x="2.5" y="5.5" width="3" height="3" fill="#2a7a78" opacity=".55"/><rect x="5.5" y="5.5" width="3" height="3" fill="#2a7a78" opacity=".55"/><rect x="8.5" y="5.5" width="3" height="3" fill="#2a7a78" opacity=".55"/><rect x="11.5" y="5.5" width="3" height="3" fill="#2a7a78" opacity=".55"/><rect x="2.5" y="8.5" width="3" height="3" fill="#2a7a78" opacity=".55"/><rect x="5.5" y="8.5" width="3" height="3" fill="#2a7a78" opacity=".55"/><rect x="8.5" y="8.5" width="3" height="3" fill="#2a7a78" opacity=".55"/><rect x="-0.5" y="11.5" width="3" height="3" fill="#2a7a78" opacity=".55"/><rect x="2.5" y="11.5" width="3" height="3" fill="#2a7a78" opacity=".55"/><rect x="3" y="0" width="2" height="2" fill="#40f0e0"/><rect x="6" y="0" width="2" height="2" fill="#40f0e0"/><rect x="9" y="0" width="2" height="2" fill="#40f0e0"/><rect x="0" y="3" width="2" height="2" fill="#40f0e0"/><rect x="3" y="3" width="2" height="2" fill="#40f0e0"/><rect x="6" y="3" width="2" height="2" fill="#40f0e0"/><rect x="9" y="3" width="2" height="2" fill="#40f0e0"/><rect x="12" y="3" width="2" height="2" fill="#40f0e0"/><rect x="0" y="6" width="2" height="2" fill="#40f0e0"/><rect x="3" y="6" width="2" height="2" fill="#40f0e0"/><rect x="6" y="6" width="2" height="2" fill="#40f0e0"/><rect x="9" y="6" width="2" height="2" fill="#40f0e0"/><rect x="12" y="6" width="2" height="2" fill="#40f0e0"/><rect x="3" y="9" width="2" height="2" fill="#40f0e0"/><rect x="6" y="9" width="2" height="2" fill="#40f0e0"/><rect x="9" y="9" width="2" height="2" fill="#40f0e0"/><rect x="0" y="12" width="2" height="2" fill="#40f0e0"/><rect x="3" y="12" width="2" height="2" fill="#40f0e0"/></svg>
<div class="tb" style="left:281.5px;top:160px;letter-spacing:0.094px;color:#c6c3c6">Database Workshop</div>
<div style="left:869px;top:159px;width:16px;height:14px;background:#c6c3c6;border-style:solid;border-width:1px;border-color:#fff #000 #000 #fff;box-shadow:inset -1px -1px #848284, inset 1px 1px #dedfde;"></div>
<svg style="left:869px;top:159px" width="16" height="14" viewBox="0 0 16 14" shape-rendering="crispEdges"><rect x="4" y="9" width="6" height="2" fill="#000"/></svg>
<div style="left:885px;top:159px;width:16px;height:14px;background:#c6c3c6;border-style:solid;border-width:1px;border-color:#fff #000 #000 #fff;box-shadow:inset -1px -1px #848284, inset 1px 1px #dedfde;"></div>
<svg style="left:885px;top:159px" width="16" height="14" viewBox="0 0 16 14" shape-rendering="crispEdges"><rect x="3" y="2" width="9" height="9" fill="#000"/><rect x="4" y="4" width="7" height="6" fill="#c6c3c6"/></svg>
<div style="left:903px;top:159px;width:16px;height:14px;background:#c6c3c6;border-style:solid;border-width:1px;border-color:#fff #000 #000 #fff;box-shadow:inset -1px -1px #848284, inset 1px 1px #dedfde;"></div>
<svg style="left:903px;top:159px" width="16" height="14" viewBox="0 0 16 14" shape-rendering="crispEdges"><path d="M4 3h2v1h-2zM10 3h2v1h-2zM5 4h2v1h-2zM9 4h2v1h-2zM6 5h4v1h-4zM7 6h2v1h-2zM6 7h4v1h-4zM5 8h2v1h-2zM9 8h2v1h-2zM4 9h2v1h-2zM10 9h2v1h-2z" fill="#000"/></svg>
<div class="t" style="left:269.5px;top:180px;letter-spacing:-0.667px;">File</div>
<div style="left:270px;top:191px;width:6px;height:1px;background:#000"></div>
<div class="t" style="left:302.5px;top:180px;letter-spacing:-0.667px;">Edit</div>
<div style="left:304px;top:191px;width:7px;height:1px;background:#000"></div>
<div class="t" style="left:340px;top:180px;letter-spacing:-0.625px;">Query</div>
<div style="left:341px;top:191px;width:8px;height:1px;background:#000"></div>
<div class="t" style="left:390.5px;top:180px;letter-spacing:-0.333px;">Help</div>
<div style="left:392px;top:191px;width:7px;height:1px;background:#000"></div>
<div class="t" style="left:431.5px;top:180px;letter-spacing:-0.571px;">Edit Off</div>
<div style="left:262px;top:195px;width:659px;height:1px;background:#848284"></div>
<div style="left:262px;top:196px;width:659px;height:1px;background:#fff"></div>
<svg style="left:267px;top:200px" width="21" height="13" viewBox="0 0 21 13" shape-rendering="crispEdges"><rect x="0" y="0" width="21" height="13" fill="#000"/><rect x="1" y="1" width="19" height="11" fill="#ffff00"/><rect x="6" y="2" width="2" height="9" fill="#c00000"/><path d="M8 6.5 L14 1.5 L14 11.5 Z" fill="#c00000"/></svg>
<svg style="left:299px;top:200px" width="21" height="13" viewBox="0 0 21 13" shape-rendering="crispEdges"><rect x="0" y="0" width="21" height="13" fill="#000"/><rect x="1" y="1" width="19" height="11" fill="#ffff00"/><path d="M7 6.5 L12 2 L12 11 Z" fill="#c00000"/></svg>
<svg style="left:331px;top:200px" width="21" height="13" viewBox="0 0 21 13" shape-rendering="crispEdges"><rect x="0" y="0" width="21" height="13" fill="#000"/><rect x="1" y="1" width="19" height="11" fill="#ffff00"/><path d="M14 6.5 L9 2 L9 11 Z" fill="#c00000"/></svg>
<svg style="left:363px;top:200px" width="21" height="13" viewBox="0 0 21 13" shape-rendering="crispEdges"><rect x="0" y="0" width="21" height="13" fill="#000"/><rect x="1" y="1" width="19" height="11" fill="#ffff00"/><path d="M13 6.5 L7 1.5 L7 11.5 Z" fill="#c00000"/><rect x="13" y="2" width="2" height="9" fill="#c00000"/></svg>
<svg style="left:395px;top:200px" width="21" height="13" viewBox="0 0 21 13" shape-rendering="crispEdges"><rect x="0" y="0" width="21" height="13" fill="#000"/><rect x="1" y="1" width="19" height="11" fill="#ffff00"/><path d="M3 4 Q3 3 5 3 H16 Q18 3 18 4 V7 Q18 9 16 9 H13 L11.5 7.5 H9.5 L8 9 H5 Q3 9 3 7 Z" fill="#0000c0" stroke="#000040" stroke-width=".8" shape-rendering="geometricPrecision"/></svg>
<svg style="left:427px;top:200px" width="21" height="13" viewBox="0 0 21 13" shape-rendering="crispEdges"><rect x="0" y="0" width="21" height="13" fill="#000"/><rect x="1" y="1" width="19" height="11" fill="#ffff00"/><path d="M3 4 Q3 3 5 3 H16 Q18 3 18 4 V7 Q18 9 16 9 H13 L11.5 7.5 H9.5 L8 9 H5 Q3 9 3 7 Z" fill="#c0c040" stroke="#404000" stroke-width="1" shape-rendering="geometricPrecision"/></svg>
<svg style="left:459px;top:200px" width="21" height="13" viewBox="0 0 21 13" shape-rendering="crispEdges"><rect x="0" y="0" width="21" height="13" fill="#000"/><rect x="1" y="1" width="19" height="11" fill="#000084"/><rect x="4" y="5" width="6" height="2" fill="#ffff00"/><rect x="6" y="3" width="2" height="6" fill="#ffff00"/><rect x="11" y="4" width="5" height="2" fill="#ffff00"/><rect x="11" y="7" width="5" height="2" fill="#ffff00"/></svg>
<svg style="left:491px;top:200px" width="21" height="13" viewBox="0 0 21 13" shape-rendering="crispEdges"><rect x="0" y="0" width="21" height="13" fill="#000"/><rect x="1" y="1" width="19" height="11" fill="#000084"/><path d="M3 5 H9 L16 2 V11 L9 8 H3 Z" fill="#a0a0c0"/><path d="M10 5 L16 2.5 V10.5 L10 8 Z" fill="#fff"/></svg>
<svg style="left:523px;top:200px" width="21" height="13" viewBox="0 0 21 13" shape-rendering="crispEdges"><rect x="0" y="0" width="21" height="13" fill="#000"/><rect x="1" y="1" width="19" height="11" fill="#ffff00"/><path d="M5 10 L10.5 3.5 L16 10 Z" fill="#000084"/></svg>
<svg style="left:555px;top:200px" width="21" height="13" viewBox="0 0 21 13" shape-rendering="crispEdges"><rect x="0" y="0" width="21" height="13" fill="#000"/><rect x="1" y="1" width="19" height="11" fill="#ffff00"/><path d="M5 3 L10.5 9.5 L16 3 Z" fill="#000084"/></svg>
<svg style="left:587px;top:200px" width="21" height="13" viewBox="0 0 21 13" shape-rendering="crispEdges"><rect x="0" y="0" width="21" height="13" fill="#000"/><rect x="1" y="1" width="19" height="11" fill="#000084"/><path d="M3 1 L9 1 L13 5 L10.5 6.5 L14.5 12 L7 7.5 L10 6 Z" fill="#f0f040" shape-rendering="geometricPrecision"/></svg>
<svg style="left:619px;top:200px" width="21" height="13" viewBox="0 0 21 13" shape-rendering="crispEdges"><rect x="0" y="0" width="21" height="13" fill="#000"/><rect x="1" y="1" width="19" height="11" fill="#0000c0"/><path d="M2 2h6v2h-1v1h-1v1h1v1h1v3h-1v1h-2v-2h-1v-3h-1v-1h-1z M9 2h9v3h-1v1h-2v-1h-1v3h-1v2h-2v-2h-1v-2h-1z M16 7h2v2h-2z" fill="#20f040"/></svg>
<div style="left:264px;top:218px;width:657px;height:302px;background:#c6c3c6;border-style:solid;border-width:1px;border-color:#000 #fff #fff #000"></div>
<div style="left:903px;top:219px;width:16px;height:284px;background-color:#fff;background-image:linear-gradient(45deg,#c6c3c6 25%,transparent 25%,transparent 75%,#c6c3c6 75%),linear-gradient(45deg,#c6c3c6 25%,transparent 25%,transparent 75%,#c6c3c6 75%);background-size:2px 2px;background-position:0 0,1px 1px;"></div>
<div style="left:265px;top:503px;width:638px;height:16px;background-color:#fff;background-image:linear-gradient(45deg,#c6c3c6 25%,transparent 25%,transparent 75%,#c6c3c6 75%),linear-gradient(45deg,#c6c3c6 25%,transparent 25%,transparent 75%,#c6c3c6 75%);background-size:2px 2px;background-position:0 0,1px 1px;"></div>
<div style="left:903px;top:219px;width:16px;height:15px;background:#c6c3c6;border-style:solid;border-width:1px;border-color:#fff #000 #000 #fff;box-shadow:inset -1px -1px #848284, inset 1px 1px #dedfde;"></div>
<svg style="left:903px;top:219px" width="16" height="15" viewBox="0 0 16 15" shape-rendering="crispEdges"><path d="M5 9h7v-1h-1v-1h-1v-1h-1v-1h-1v1h-1v1h-1v1h-1z" fill="#000"/></svg>
<div style="left:903px;top:234px;width:16px;height:16px;background:#c6c3c6;border-style:solid;border-width:1px;border-color:#fff #000 #000 #fff;box-shadow:inset -1px -1px #848284, inset 1px 1px #dedfde;"></div>
<div style="left:903px;top:487px;width:16px;height:16px;background:#c6c3c6;border-style:solid;border-width:1px;border-color:#fff #000 #000 #fff;box-shadow:inset -1px -1px #848284, inset 1px 1px #dedfde;"></div>
<svg style="left:903px;top:487px" width="16" height="16" viewBox="0 0 16 16" shape-rendering="crispEdges"><path d="M5 6h7v1h-1v1h-1v1h-1v1h-1v-1h-1v-1h-1v-1h-1z" fill="#000"/></svg>
<div style="left:265px;top:503px;width:16px;height:15px;background:#c6c3c6;border-style:solid;border-width:1px;border-color:#fff #000 #000 #fff;box-shadow:inset -1px -1px #848284, inset 1px 1px #dedfde;"></div>
<svg style="left:265px;top:503px" width="16" height="15" viewBox="0 0 16 15" shape-rendering="crispEdges"><path d="M9 3h1v8h-1v-1h-1v-1h-1v-1h-1v-2h1v-1h1v-1h1z" fill="#000"/></svg>
<div style="left:871px;top:503px;width:16px;height:15px;background:#c6c3c6;border-style:solid;border-width:1px;border-color:#fff #000 #000 #fff;box-shadow:inset -1px -1px #848284, inset 1px 1px #dedfde;"></div>
<div style="left:887px;top:503px;width:16px;height:15px;background:#c6c3c6;border-style:solid;border-width:1px;border-color:#fff #000 #000 #fff;box-shadow:inset -1px -1px #848284, inset 1px 1px #dedfde;"></div>
<svg style="left:887px;top:503px" width="16" height="15" viewBox="0 0 16 15" shape-rendering="crispEdges"><path d="M6 3h1v1h1v1h1v1h1v2h-1v1h-1v1h-1v1h-1z" fill="#000"/></svg>
<div style="left:265px;top:219px;width:12px;height:18px;background:#c6c3c6;border-style:solid;border-width:1px;border-color:#fff #000 #000 #fff;border-right-color:#000;border-bottom-color:#000;border-width:1px 1px 1px 1px"></div>
<div style="left:277px;top:219px;width:81px;height:18px;background:#c6c3c6;border-left:1px solid #fff;border-top:1px solid #fff;border-right:1px solid #000;border-bottom:1px solid #000;box-shadow:inset -1px 0 #848284"></div>
<div class="t" style="left:278.3px;top:221px;letter-spacing:-0.500px;color:#000084">V117</div>
<div style="left:358px;top:219px;width:81px;height:18px;background:#c6c3c6;border-left:1px solid #fff;border-top:1px solid #fff;border-right:1px solid #000;border-bottom:1px solid #000;box-shadow:inset -1px 0 #848284"></div>
<div class="t" style="left:359.3px;top:221px;letter-spacing:-0.500px;color:#000084">V118</div>
<div style="left:439px;top:219px;width:81px;height:18px;background:#c6c3c6;border-left:1px solid #fff;border-top:1px solid #fff;border-right:1px solid #000;border-bottom:1px solid #000;box-shadow:inset -1px 0 #848284"></div>
<div class="t" style="left:440.3px;top:221px;letter-spacing:-0.500px;color:#000084">V119</div>
<div style="left:520px;top:219px;width:81px;height:18px;background:#c6c3c6;border-left:1px solid #fff;border-top:1px solid #fff;border-right:1px solid #000;border-bottom:1px solid #000;box-shadow:inset -1px 0 #848284"></div>
<div class="t" style="left:521.3px;top:221px;letter-spacing:-0.833px;color:#000084">V120</div>
<div style="left:601px;top:219px;width:81px;height:18px;background:#c6c3c6;border-left:1px solid #fff;border-top:1px solid #fff;border-right:1px solid #000;border-bottom:1px solid #000;box-shadow:inset -1px 0 #848284"></div>
<div class="t" style="left:602.3px;top:221px;letter-spacing:-0.500px;color:#000084">V121</div>
<div style="left:682px;top:219px;width:81px;height:18px;background:#c6c3c6;border-left:1px solid #fff;border-top:1px solid #fff;border-right:1px solid #000;border-bottom:1px solid #000;box-shadow:inset -1px 0 #848284"></div>
<div class="t" style="left:683.3px;top:221px;letter-spacing:-0.500px;color:#000084">V122</div>
<div style="left:763px;top:219px;width:137px;height:18px;background:#c6c3c6;border-left:1px solid #fff;border-top:1px solid #fff;border-right:1px solid #000;border-bottom:1px solid #000;box-shadow:inset -1px 0 #848284"></div>
<div class="t" style="left:763.3px;top:221px;letter-spacing:-0.604px;color:#000084">Never Married Children total</div>
<div style="left:277px;top:237px;width:623px;height:266px;background:#ffeb94"></div>
<div style="left:900px;top:237px;width:3px;height:266px;background:#ffeb94"></div>
<div style="left:265px;top:237px;width:12px;height:18px;background:#c6c3c6;border-style:solid;border-width:1px;border-color:#fff #000 #000 #fff"></div>
<div style="left:277px;top:254px;width:623px;height:1px;background:#d8c48a"></div>
<div class="t" style="left:279px;top:240px;letter-spacing:-0.167px;">2230</div>
<div class="t" style="left:361px;top:240px;letter-spacing:-0.250px;">425</div>
<div class="t" style="left:441px;top:240px;letter-spacing:0.250px;">625</div>
<div class="t" style="left:523px;top:240px;letter-spacing:-0.750px;">430</div>
<div class="t" style="left:603px;top:240px;letter-spacing:-0.250px;">650</div>
<div class="t" style="left:684px;top:240px;letter-spacing:0.500px;">90</div>
<div style="left:265px;top:255px;width:12px;height:18px;background:#c6c3c6;border-style:solid;border-width:1px;border-color:#fff #000 #000 #fff"></div>
<div style="left:277px;top:272px;width:623px;height:1px;background:#d8c48a"></div>
<div class="t" style="left:279px;top:258px;letter-spacing:-0.167px;">1330</div>
<div class="t" style="left:360px;top:258px;letter-spacing:-0.250px;">240</div>
<div class="t" style="left:442px;top:258px;letter-spacing:-0.750px;">430</div>
<div class="t" style="left:522px;top:258px;letter-spacing:-0.250px;">270</div>
<div class="t" style="left:603px;top:258px;letter-spacing:0.250px;">335</div>
<div class="t" style="left:684px;top:258px;letter-spacing:0.500px;">55</div>
<div style="left:265px;top:273px;width:12px;height:18px;background:#c6c3c6;border-style:solid;border-width:1px;border-color:#fff #000 #000 #fff"></div>
<div style="left:277px;top:290px;width:623px;height:1px;background:#d8c48a"></div>
<div class="t" style="left:279px;top:276px;letter-spacing:-0.167px;">1900</div>
<div class="t" style="left:360px;top:276px;letter-spacing:0.250px;">535</div>
<div class="t" style="left:441px;top:276px;letter-spacing:-0.250px;">590</div>
<div class="t" style="left:522px;top:276px;letter-spacing:-0.250px;">290</div>
<div class="t" style="left:604px;top:276px;letter-spacing:-0.750px;">400</div>
<div class="t" style="left:684px;top:276px;letter-spacing:0.500px;">80</div>
<div style="left:265px;top:291px;width:12px;height:18px;background:#c6c3c6;border-style:solid;border-width:1px;border-color:#fff #000 #000 #fff"></div>
<div style="left:277px;top:308px;width:623px;height:1px;background:#d8c48a"></div>
<div style="left:265px;top:309px;width:12px;height:18px;background:#c6c3c6;border-style:solid;border-width:1px;border-color:#fff #000 #000 #fff"></div>
<div style="left:277px;top:326px;width:623px;height:1px;background:#d8c48a"></div>
<div style="left:265px;top:327px;width:12px;height:18px;background:#c6c3c6;border-style:solid;border-width:1px;border-color:#fff #000 #000 #fff"></div>
<div style="left:277px;top:344px;width:623px;height:1px;background:#d8c48a"></div>
<div style="left:265px;top:345px;width:12px;height:18px;background:#c6c3c6;border-style:solid;border-width:1px;border-color:#fff #000 #000 #fff"></div>
<div style="left:277px;top:362px;width:623px;height:1px;background:#d8c48a"></div>
<div style="left:265px;top:363px;width:12px;height:18px;background:#c6c3c6;border-style:solid;border-width:1px;border-color:#fff #000 #000 #fff"></div>
<div style="left:277px;top:380px;width:623px;height:1px;background:#d8c48a"></div>
<div style="left:265px;top:381px;width:12px;height:18px;background:#c6c3c6;border-style:solid;border-width:1px;border-color:#fff #000 #000 #fff"></div>
<div style="left:277px;top:398px;width:623px;height:1px;background:#d8c48a"></div>
<div style="left:265px;top:399px;width:12px;height:18px;background:#c6c3c6;border-style:solid;border-width:1px;border-color:#fff #000 #000 #fff"></div>
<div style="left:277px;top:416px;width:623px;height:1px;background:#d8c48a"></div>
<div style="left:265px;top:417px;width:12px;height:18px;background:#c6c3c6;border-style:solid;border-width:1px;border-color:#fff #000 #000 #fff"></div>
<div style="left:277px;top:434px;width:623px;height:1px;background:#d8c48a"></div>
<div style="left:265px;top:435px;width:12px;height:18px;background:#c6c3c6;border-style:solid;border-width:1px;border-color:#fff #000 #000 #fff"></div>
<div style="left:277px;top:452px;width:623px;height:1px;background:#d8c48a"></div>
<div style="left:265px;top:453px;width:12px;height:18px;background:#c6c3c6;border-style:solid;border-width:1px;border-color:#fff #000 #000 #fff"></div>
<div style="left:277px;top:470px;width:623px;height:1px;background:#d8c48a"></div>
<div style="left:265px;top:471px;width:12px;height:18px;background:#c6c3c6;border-style:solid;border-width:1px;border-color:#fff #000 #000 #fff"></div>
<div style="left:277px;top:488px;width:623px;height:1px;background:#d8c48a"></div>
<div style="left:265px;top:489px;width:12px;height:14px;background:#c6c3c6;border-style:solid;border-width:1px;border-color:#fff #000 #000 #fff;border-bottom-width:0"></div>
<div class="t" style="left:279px;top:492px;letter-spacing:-0.167px;">2360</div>
<div class="t" style="left:361px;top:492px;letter-spacing:-0.250px;">495</div>
<div class="t" style="left:441px;top:492px;letter-spacing:0.250px;">645</div>
<div class="t" style="left:523px;top:492px;letter-spacing:-0.750px;">400</div>
<div class="t" style="left:603px;top:492px;letter-spacing:0.250px;">645</div>
<div class="t" style="left:684px;top:492px;letter-spacing:-0.250px;">180</div>
<div style="left:357px;top:237px;width:1px;height:266px;background:#d8c48a"></div>
<div style="left:438px;top:237px;width:1px;height:266px;background:#d8c48a"></div>
<div style="left:519px;top:237px;width:1px;height:266px;background:#d8c48a"></div>
<div style="left:600px;top:237px;width:1px;height:266px;background:#d8c48a"></div>
<div style="left:681px;top:237px;width:1px;height:266px;background:#d8c48a"></div>
<div style="left:762px;top:237px;width:1px;height:266px;background:#d8c48a"></div>
<div style="left:899px;top:237px;width:1px;height:266px;background:#d8c48a"></div>
<svg style="left:265px;top:237px" width="12" height="18" viewBox="0 0 12 18" shape-rendering="crispEdges"><path d="M3 3h1v11h-1z M4 4h1v9h-1z M5 5h1v7h-1z M6 6h1v5h-1z M7 7h1v3h-1z M8 8h1v1h-1z" fill="#000"/></svg>
<div style="left:763px;top:237px;width:137px;height:17px;border:1px dotted #000"></div>
<div style="left:262px;top:522px;width:225px;height:19px;background:#c6c3c6;border-style:solid;border-width:1px;border-color:#848284 #fff #fff #848284;"></div>
<div class="t" style="left:263.5px;top:526px;letter-spacing:-0.617px;">Database : table1!table1</div>
<div style="left:489px;top:522px;width:73px;height:19px;background:#c6c3c6;border-style:solid;border-width:1px;border-color:#848284 #fff #fff #848284;"></div>
<div class="t" style="left:490.5px;top:526px;letter-spacing:-0.312px;">Col : 122</div>
<div style="left:564px;top:522px;width:73px;height:19px;background:#c6c3c6;border-style:solid;border-width:1px;border-color:#848284 #fff #fff #848284;"></div>
<div class="t" style="left:565.5px;top:526px;letter-spacing:-0.133px;">Row : 0</div>
<div style="left:639px;top:522px;width:128px;height:19px;background:#c6c3c6;border-style:solid;border-width:1px;border-color:#848284 #fff #fff #848284;"></div>
<div class="t" style="left:640.5px;top:526px;letter-spacing:-0.461px;">Data Type : integer</div>
<div style="left:769px;top:522px;width:153px;height:19px;background:#c6c3c6;border-style:solid;border-width:1px;border-color:#848284 #fff #fff #848284;"></div>
<div class="t" style="left:770.5px;top:526px;letter-spacing:-0.458px;">Records : 298</div>
<svg style="left:906px;top:527px" width="14" height="14" viewBox="0 0 14 14" shape-rendering="crispEdges"><path d="M13 1 L1 13 M13 5 L5 13 M13 9 L9 13" stroke="#848284" stroke-width="1"/><path d="M13 2 L2 13 M13 6 L6 13 M13 10 L10 13" stroke="#fff" stroke-width="1"/></svg>
<div style="left:210px;top:285px;width:618px;height:204px;background:#c6c3c6;border:1px solid;border-color:#dedfde #000 #000 #dedfde;box-shadow:inset 1px 1px #fff, inset -1px -1px #848284"></div>
<div style="left:213px;top:288px;width:612px;height:18px;background:#000084"></div>
<svg style="left:216px;top:290px" width="15" height="15" viewBox="0 0 15 15" shape-rendering="crispEdges"><rect x="2.5" y="-0.5" width="3" height="3" fill="#2a7a78" opacity=".55"/><rect x="5.5" y="-0.5" width="3" height="3" fill="#2a7a78" opacity=".55"/><rect x="8.5" y="-0.5" width="3" height="3" fill="#2a7a78" opacity=".55"/><rect x="-0.5" y="2.5" width="3" height="3" fill="#2a7a78" opacity=".55"/><rect x="2.5" y="2.5" width="3" height="3" fill="#2a7a78" opacity=".55"/><rect x="5.5" y="2.5" width="3" height="3" fill="#2a7a78" opacity=".55"/><rect x="8.5" y="2.5" width="3" height="3" fill="#2a7a78" opacity=".55"/><rect x="11.5" y="2.5" width="3" height="3" fill="#2a7a78" opacity=".55"/><rect x="-0.5" y="5.5" width="3" height="3" fill="#2a7a78" opacity=".55"/><rect x="2.5" y="5.5" width="3" height="3" fill="#2a7a78" opacity=".55"/><rect x="5.5" y="5.5" width="3" height="3" fill="#2a7a78" opacity=".55"/><rect x="8.5" y="5.5" width="3" height="3" fill="#2a7a78" opacity=".55"/><rect x="11.5" y="5.5" width="3" height="3" fill="#2a7a78" opacity=".55"/><rect x="2.5" y="8.5" width="3" height="3" fill="#2a7a78" opacity=".55"/><rect x="5.5" y="8.5" width="3" height="3" fill="#2a7a78" opacity=".55"/><rect x="8.5" y="8.5" width="3" height="3" fill="#2a7a78" opacity=".55"/><rect x="-0.5" y="11.5" width="3" height="3" fill="#2a7a78" opacity=".55"/><rect x="2.5" y="11.5" width="3" height="3" fill="#2a7a78" opacity=".55"/><rect x="3" y="0" width="2" height="2" fill="#40f0e0"/><rect x="6" y="0" width="2" height="2" fill="#40f0e0"/><rect x="9" y="0" width="2" height="2" fill="#40f0e0"/><rect x="0" y="3" width="2" height="2" fill="#40f0e0"/><rect x="3" y="3" width="2" height="2" fill="#40f0e0"/><rect x="6" y="3" width="2" height="2" fill="#40f0e0"/><rect x="9" y="3" width="2" height="2" fill="#40f0e0"/><rect x="12" y="3" width="2" height="2" fill="#40f0e0"/><rect x="0" y="6" width="2" height="2" fill="#40f0e0"/><rect x="3" y="6" width="2" height="2" fill="#40f0e0"/><rect x="6" y="6" width="2" height="2" fill="#40f0e0"/><rect x="9" y="6" width="2" height="2" fill="#40f0e0"/><rect x="12" y="6" width="2" height="2" fill="#40f0e0"/><rect x="3" y="9" width="2" height="2" fill="#40f0e0"/><rect x="6" y="9" width="2" height="2" fill="#40f0e0"/><rect x="9" y="9" width="2" height="2" fill="#40f0e0"/><rect x="0" y="12" width="2" height="2" fill="#40f0e0"/><rect x="3" y="12" width="2" height="2" fill="#40f0e0"/></svg>
<div class="tb" style="left:232.5px;top:291px;letter-spacing:0.125px;color:#fff">SQL Calculate</div>
<div style="left:806px;top:290px;width:16px;height:14px;background:#c6c3c6;border-style:solid;border-width:1px;border-color:#fff #000 #000 #fff;box-shadow:inset -1px -1px #848284, inset 1px 1px #dedfde;"></div>
<svg style="left:806px;top:290px" width="16" height="14" viewBox="0 0 16 14" shape-rendering="crispEdges"><path d="M4 3h2v1h-2zM10 3h2v1h-2zM5 4h2v1h-2zM9 4h2v1h-2zM6 5h4v1h-4zM7 6h2v1h-2zM6 7h4v1h-4zM5 8h2v1h-2zM9 8h2v1h-2zM4 9h2v1h-2zM10 9h2v1h-2z" fill="#000"/></svg>
<div class="t" style="left:226.5px;top:329px;letter-spacing:-0.250px;">Set :</div>
<div style="left:266px;top:325px;width:247px;height:21px;background:#fff;border-style:solid;border-width:1px;border-color:#848284 #fff #fff #848284;box-shadow:inset 1px 1px #000, inset -1px -1px #dedfde;"></div>
<div class="t" style="left:268.5px;top:329px;letter-spacing:-0.630px;">Never Married Children total</div>
<div style="left:495px;top:327px;width:16px;height:17px;background:#c6c3c6;border-style:solid;border-width:1px;border-color:#fff #000 #000 #fff;box-shadow:inset -1px -1px #848284, inset 1px 1px #dedfde;"></div>
<svg style="left:495px;top:327px" width="16" height="17" viewBox="0 0 16 17" shape-rendering="crispEdges"><path d="M4 7h7v1h-1v1h-1v1h-1v1h-1v-1h-1v-1h-1v-1h-1z" fill="#000"/></svg>
<div style="left:236px;top:376px;width:8px;height:1px;background:#000"></div>
<div style="left:236px;top:379px;width:8px;height:1px;background:#000"></div>
<div style="left:266px;top:366px;width:247px;height:112px;background:#fff;border-style:solid;border-width:1px;border-color:#848284 #fff #fff #848284;box-shadow:inset 1px 1px #000, inset -1px -1px #dedfde;"></div>
<div class="t" style="left:268.5px;top:370px;letter-spacing:-0.500px;">[V091]  + [V092]</div>
<div style="left:528px;top:315px;width:60px;height:19px;background:#c6c3c6;border-style:solid;border-width:1px 1px 0 1px;border-color:#fff #000 #000 #fff;box-shadow:inset -1px 0 #848284"></div>
<div class="t" style="left:533.8px;top:319px;letter-spacing:-0.237px;">Rel/Logic</div>
<div style="left:588px;top:315px;width:58px;height:19px;background:#c6c3c6;border-style:solid;border-width:1px 1px 0 1px;border-color:#fff #000 #000 #fff;box-shadow:inset -1px 0 #848284"></div>
<div class="t" style="left:592.7px;top:319px;letter-spacing:-0.578px;">Arithmetic</div>
<div style="left:646px;top:315px;width:41px;height:19px;background:#c6c3c6;border-style:solid;border-width:1px 1px 0 1px;border-color:#fff #000 #000 #fff;box-shadow:inset -1px 0 #848284"></div>
<div class="t" style="left:650.2px;top:319px;letter-spacing:-0.167px;">Math</div>
<div style="left:687px;top:315px;width:42px;height:19px;background:#c6c3c6;border-style:solid;border-width:1px 1px 0 1px;border-color:#fff #000 #000 #fff;box-shadow:inset -1px 0 #848284"></div>
<div class="t" style="left:692.4px;top:319px;letter-spacing:-0.480px;">String</div>
<div style="left:729px;top:315px;width:47px;height:19px;background:#c6c3c6;border-style:solid;border-width:1px 1px 0 1px;border-color:#fff #000 #000 #fff;box-shadow:inset -1px 0 #848284"></div>
<div class="t" style="left:734.6px;top:319px;letter-spacing:-0.480px;">Keypad</div>
<div style="left:526px;top:333px;width:296px;height:115px;background:#c6c3c6;border:1px solid;border-color:#fff #000 #000 #fff;box-shadow:inset -1px -1px #848284"></div>
<div style="left:776px;top:313px;width:46px;height:21px;background:#c6c3c6;border-style:solid;border-width:1px 1px 0 1px;border-color:#fff #000 #000 #fff;box-shadow:inset -1px 0 #848284"></div>
<div class="t" style="left:782.7px;top:317px;letter-spacing:-0.780px;">Fields</div>
<div style="left:533px;top:340px;width:281px;height:100px;background:#fff;border-style:solid;border-width:1px;border-color:#848284 #fff #fff #848284;box-shadow:inset 1px 1px #000, inset -1px -1px #dedfde;"></div>
<div style="left:535px;top:355px;width:260px;height:13px;background:#000084"></div>
<div class="t" style="left:537px;top:343px;letter-spacing:-0.667px;">V091</div>
<div class="t" style="left:537px;top:356px;letter-spacing:-0.667px;color:#fff">V092</div>
<div class="t" style="left:537px;top:369px;letter-spacing:-0.667px;">V093</div>
<div class="t" style="left:537px;top:382px;letter-spacing:-1.000px;">V094</div>
<div class="t" style="left:537px;top:395px;letter-spacing:-0.667px;">V095</div>
<div class="t" style="left:537px;top:408px;letter-spacing:-0.667px;">V096</div>
<div class="t" style="left:537px;top:421px;letter-spacing:-0.667px;">V097</div>
<div style="left:535px;top:433px;width:260px;height:5px;overflow:hidden"><div class="t" style="left:2px;top:-3px">V098</div></div>
<div style="left:795px;top:342px;width:16px;height:96px;background-color:#fff;background-image:linear-gradient(45deg,#c6c3c6 25%,transparent 25%,transparent 75%,#c6c3c6 75%),linear-gradient(45deg,#c6c3c6 25%,transparent 25%,transparent 75%,#c6c3c6 75%);background-size:2px 2px;background-position:0 0,1px 1px;"></div>
<div style="left:795px;top:342px;width:16px;height:16px;background:#c6c3c6;border-style:solid;border-width:1px;border-color:#fff #000 #000 #fff;box-shadow:inset -1px -1px #848284, inset 1px 1px #dedfde;"></div>
<svg style="left:795px;top:342px" width="16" height="16" viewBox="0 0 16 16" shape-rendering="crispEdges"><path d="M4 9h7v-1h-1v-1h-1v-1h-1v-1h-1v1h-1v1h-1v1h-1z" fill="#000"/></svg>
<div style="left:795px;top:402px;width:16px;height:7px;background:#c6c3c6;border-style:solid;border-width:1px;border-color:#fff #000 #000 #fff;box-shadow:inset -1px -1px #848284, inset 1px 1px #dedfde;"></div>
<div style="left:795px;top:422px;width:16px;height:16px;background:#c6c3c6;border-style:solid;border-width:1px;border-color:#fff #000 #000 #fff;box-shadow:inset -1px -1px #848284, inset 1px 1px #dedfde;"></div>
<svg style="left:795px;top:422px" width="16" height="16" viewBox="0 0 16 16" shape-rendering="crispEdges"><path d="M4 6h7v1h-1v1h-1v1h-1v1h-1v-1h-1v-1h-1v-1h-1z" fill="#000"/></svg>
<div style="left:526px;top:457px;width:89px;height:22px;border:1px solid #000"></div>
<div style="left:527px;top:458px;width:87px;height:20px;background:#c6c3c6;border-style:solid;border-width:1px;border-color:#fff #000 #000 #fff;box-shadow:inset -1px -1px #848284, inset 1px 1px #dedfde;"></div>
<div class="t" style="left:561.6px;top:462px;letter-spacing:-0.900px;">OK</div>
<div style="left:630px;top:457px;width:89px;height:22px;background:#c6c3c6;border-style:solid;border-width:1px;border-color:#fff #000 #000 #fff;box-shadow:inset -1px -1px #848284, inset 1px 1px #dedfde;"></div>
<div class="t" style="left:657.7px;top:462px;letter-spacing:-0.420px;">Cancel</div>
<div style="left:733px;top:457px;width:89px;height:22px;background:#c6c3c6;border-style:solid;border-width:1px;border-color:#fff #000 #000 #fff;box-shadow:inset -1px -1px #848284, inset 1px 1px #dedfde;"></div>
<div class="t" style="left:765.6px;top:462px;letter-spacing:-0.067px;">Help</div>
</body></html>
